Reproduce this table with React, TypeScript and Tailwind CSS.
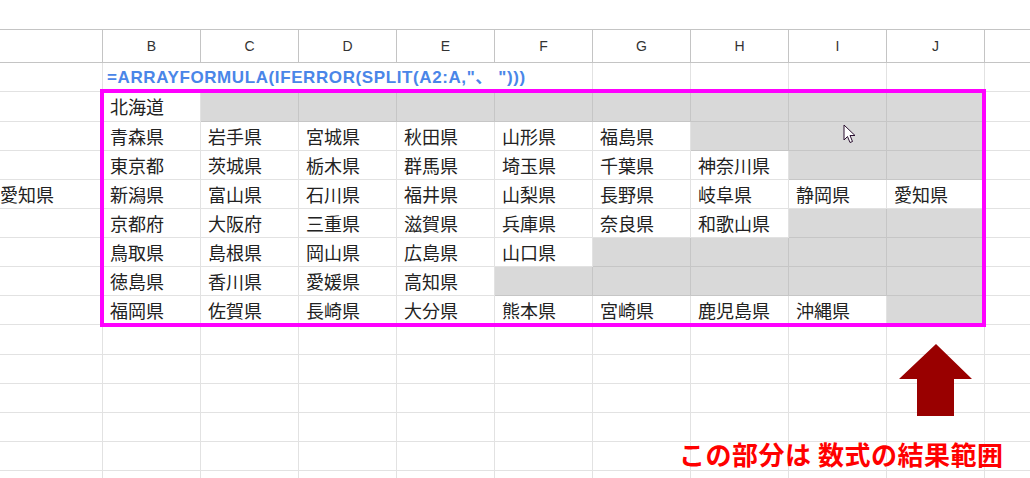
import React from 'react';

const COLS = ['B', 'C', 'D', 'E', 'F', 'G', 'H', 'I', 'J'];

// null = empty cell inside the formula result (gray)
const DATA: (string | null)[][] = [
  ['北海道', null, null, null, null, null, null, null, null],
  ['青森県', '岩手県', '宮城県', '秋田県', '山形県', '福島県', null, null, null],
  ['東京都', '茨城県', '栃木県', '群馬県', '埼玉県', '千葉県', '神奈川県', null, null],
  ['新潟県', '富山県', '石川県', '福井県', '山梨県', '長野県', '岐阜県', '静岡県', '愛知県'],
  ['京都府', '大阪府', '三重県', '滋賀県', '兵庫県', '奈良県', '和歌山県', null, null],
  ['鳥取県', '島根県', '岡山県', '広島県', '山口県', null, null, null, null],
  ['徳島県', '香川県', '愛媛県', '高知県', null, null, null, null, null],
  ['福岡県', '佐賀県', '長崎県', '大分県', '熊本県', '宮崎県', '鹿児島県', '沖縄県', null],
];

const DATA_HEIGHTS = ['h-[30px]', 'h-[29px]', 'h-[29px]', 'h-[29px]', 'h-[29px]', 'h-[29px]', 'h-[29px]', 'h-[29px]'];
const EMPTY_HEIGHTS = ['h-[30px]', 'h-[29px]', 'h-[29px]', 'h-[29px]', 'h-[29px]', 'h-[29px]'];

const jp = "font-['Noto_Sans_CJK_JP','Noto_Sans_CJK_SC',sans-serif]";
const grid = 'grid grid-cols-[103px_repeat(9,98px)_1fr]';

function Cursor() {
  return (
    <svg className="absolute left-[843px] top-[124px]" width="14" height="21" viewBox="0 0 14 21">
      <path d="M1 1 L1 16 L4.5 12.5 L7 18.5 L9.5 17.5 L7 11.5 L12 11.5 Z" fill="#fff" stroke="#2a1030" strokeWidth="1" strokeLinejoin="round" />
    </svg>
  );
}

export default function App() {
  return (
    <div className="relative w-[1030px] h-[478px] overflow-hidden bg-white text-[#222]">
      <div className="h-[29px]" />

      {/* column headers */}
      <div className={`${grid} h-[34px] border-y border-[#c4c4c4] font-['Liberation_Sans',Arial,sans-serif] text-[14px] text-[#333]`}>
        <div className="border-r border-[#c4c4c4]" />
        {COLS.map(c => (
          <div key={c} className="flex items-center justify-center border-r border-[#c4c4c4]">
            {c}
          </div>
        ))}
        <div />
      </div>

      {/* formula row */}
      <div className={`${grid} h-[29px]`}>
        <div className="border-r border-b border-[#e2e2e2]" />
        <div className="relative border-b border-[#e2e2e2]">
          <span className="absolute left-[4px] top-[2px] whitespace-nowrap font-['Liberation_Sans','Noto_Sans_CJK_JP',sans-serif] text-[17px] tracking-[0.6px] font-bold text-[#4a86e8]">
            =ARRAYFORMULA(IFERROR(SPLIT(A2:A,"、 ")))
          </span>
        </div>
        <div className="border-b border-[#e2e2e2]" />
        <div className="border-b border-[#e2e2e2]" />
        <div className="border-b border-[#e2e2e2]" />
        {['F', 'G', 'H', 'I', 'J'].map(c => (
          <div key={c} className="border-r border-b border-[#e2e2e2]" />
        ))}
        <div className="border-b border-[#e2e2e2]" />
      </div>

      {/* result rows */}
      {DATA.map((row, r) => (
        <div key={r} className={`${grid} ${DATA_HEIGHTS[r]} ${jp} text-[18px]`}>
          <div className="flex items-center border-r border-b border-[#e2e2e2] pl-0">
            {r === 3 ? '愛知県' : ''}
          </div>
          {row.map((v, c) =>
            v === null ? (
              <div key={c} className="bg-[#d9d9d9] border-r border-b border-[#c6c6c6]" />
            ) : (
              <div key={c} className="flex items-center pl-[7px] whitespace-nowrap border-r border-b border-[#e2e2e2]">
                {v}
              </div>
            )
          )}
          <div className="border-b border-[#e2e2e2]" />
        </div>
      ))}

      {/* empty rows below */}
      {EMPTY_HEIGHTS.map((h, r) => (
        <div key={r} className={`${grid} ${h}`}>
          <div className="border-r border-b border-[#e2e2e2]" />
          {COLS.map(c => (
            <div key={c} className="border-r border-b border-[#e2e2e2]" />
          ))}
          <div className="border-b border-[#e2e2e2]" />
        </div>
      ))}

      {/* result range outline */}
      <div className="absolute left-[100px] top-[89px] w-[886px] h-[238px] border-4 border-[#ff00ff] pointer-events-none" />

      <Cursor />

      {/* up arrow */}
      <svg className="absolute left-[898px] top-[343px]" width="76" height="75" viewBox="0 0 76 75">
        <polygon points="38,1 74,36 56,36 56,73 19,73 19,36 1,36" fill="#990000" />
      </svg>

      <div className={`absolute left-[679px] top-[434px] whitespace-nowrap ${jp} text-[26px] tracking-[0.5px] font-bold text-[#ff0000]`}>
        この部分は 数式の結果範囲
      </div>
    </div>
  );
}
